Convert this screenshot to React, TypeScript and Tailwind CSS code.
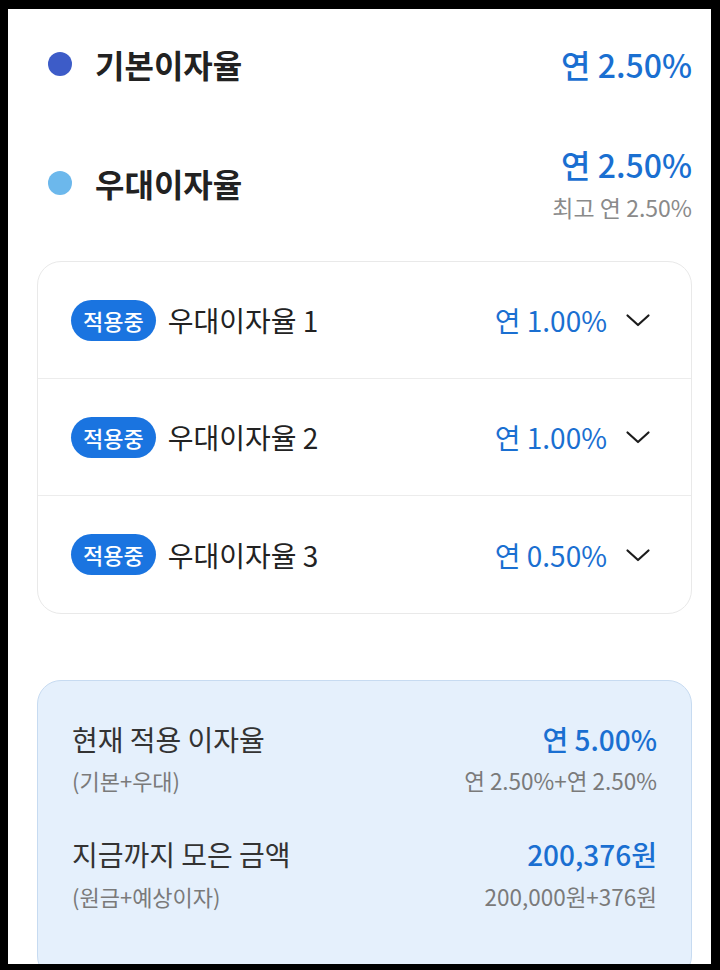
import React from "react";

const FONT = { fontFamily: '"Noto Sans CJK KR", "Noto Sans", sans-serif' };

const BENEFITS = [
  { name: "우대이자율 1", rate: "연 1.00%" },
  { name: "우대이자율 2", rate: "연 1.00%" },
  { name: "우대이자율 3", rate: "연 0.50%" },
];

const Chevron = () => (
  <svg width="26" height="16" viewBox="0 0 26 16" fill="none">
    <path
      d="M2.5 3.5 L13 13 L23.5 3.5"
      stroke="#1c1c1c"
      strokeWidth="2.2"
      strokeLinecap="round"
      strokeLinejoin="round"
    />
  </svg>
);

const App = () => {
  return (
    <div
      className="h-[970px] w-[720px] overflow-hidden border-t-[9px] border-r-[9px] border-b-[6px] border-l-[8px] border-black bg-white"
      style={FONT}
    >
      <div className="pt-[35px] pr-[19px] pl-[29px]">
        {/* 기본이자율 */}
        <div className="flex items-center justify-between">
          <div className="flex items-center">
            <span className="ml-[11px] h-[24px] w-[24px] rounded-full bg-[#3d5cc8]" />
            <span className="ml-[23px] text-[32px] leading-[40px] font-semibold text-[#222]">
              기본이자율
            </span>
          </div>
          <span className="text-[32px] leading-[40px] font-medium text-[#1a6fd1]">
            연 2.50%
          </span>
        </div>

        {/* 우대이자율 */}
        <div className="mt-[60px] flex items-center justify-between">
          <div className="flex items-center">
            <span className="ml-[11px] h-[24px] w-[24px] rounded-full bg-[#6cb8ec]" />
            <span className="ml-[23px] text-[32px] leading-[40px] font-semibold text-[#222]">
              우대이자율
            </span>
          </div>
          <div className="flex flex-col items-end">
            <span className="text-[32px] leading-[40px] font-medium text-[#1a6fd1]">
              연 2.50%
            </span>
            <span className="mt-[9px] text-[23px] leading-[28px] text-[#8a8a8a]">
              최고 연 2.50%
            </span>
          </div>
        </div>

        {/* 우대 항목 */}
        <div className="mt-[40px] rounded-[24px] border border-[#e9e9e9]">
          {BENEFITS.map((b, i) => (
            <div
              key={b.name}
              className={`flex h-[117px] items-center justify-between pr-[40px] pl-[33px] ${
                i < BENEFITS.length - 1 ? "border-b border-[#ececec]" : ""
              }`}
            >
              <div className="flex items-center">
                <span className="flex h-[41px] items-center rounded-full bg-[#1a74e0] px-[12px] text-[22px] font-medium text-white">
                  적용중
                </span>
                <span className="ml-[12px] text-[28px] leading-[36px] text-[#222]">
                  {b.name}
                </span>
              </div>
              <div className="flex items-center">
                <span className="text-[28px] leading-[36px] text-[#1a6fd1]">
                  {b.rate}
                </span>
                <span className="ml-[18px]">
                  <Chevron />
                </span>
              </div>
            </div>
          ))}
        </div>

        {/* 요약 */}
        <div className="mt-[66px] h-[300px] rounded-[24px] border-[1.5px] border-[#c7dbf1] bg-[#e5f0fc] px-[34px] pt-[42px]">
          <div className="flex items-center justify-between">
            <span className="text-[28px] leading-[32px] text-[#333]">현재 적용 이자율</span>
            <span className="text-[28px] leading-[32px] font-medium text-[#1a6fd1]">
              연 5.00%
            </span>
          </div>
          <div className="mt-[11px] flex items-center justify-between leading-[28px] text-[#7a7a7a]">
            <span className="text-[22px]">(기본+우대)</span>
            <span className="text-[22.5px]">연 2.50%+연 2.50%</span>
          </div>

          <div className="mt-[44px] flex items-center justify-between">
            <span className="text-[28px] leading-[32px] text-[#333]">지금까지 모은 금액</span>
            <span className="text-[28px] leading-[32px] font-medium text-[#1a6fd1]">
              200,376원
            </span>
          </div>
          <div className="mt-[12px] flex items-center justify-between leading-[28px] text-[#7a7a7a]">
            <span className="text-[22px]">(원금+예상이자)</span>
            <span className="text-[22.5px]">200,000원+376원</span>
          </div>
        </div>
      </div>
    </div>
  );
};

export default App;
